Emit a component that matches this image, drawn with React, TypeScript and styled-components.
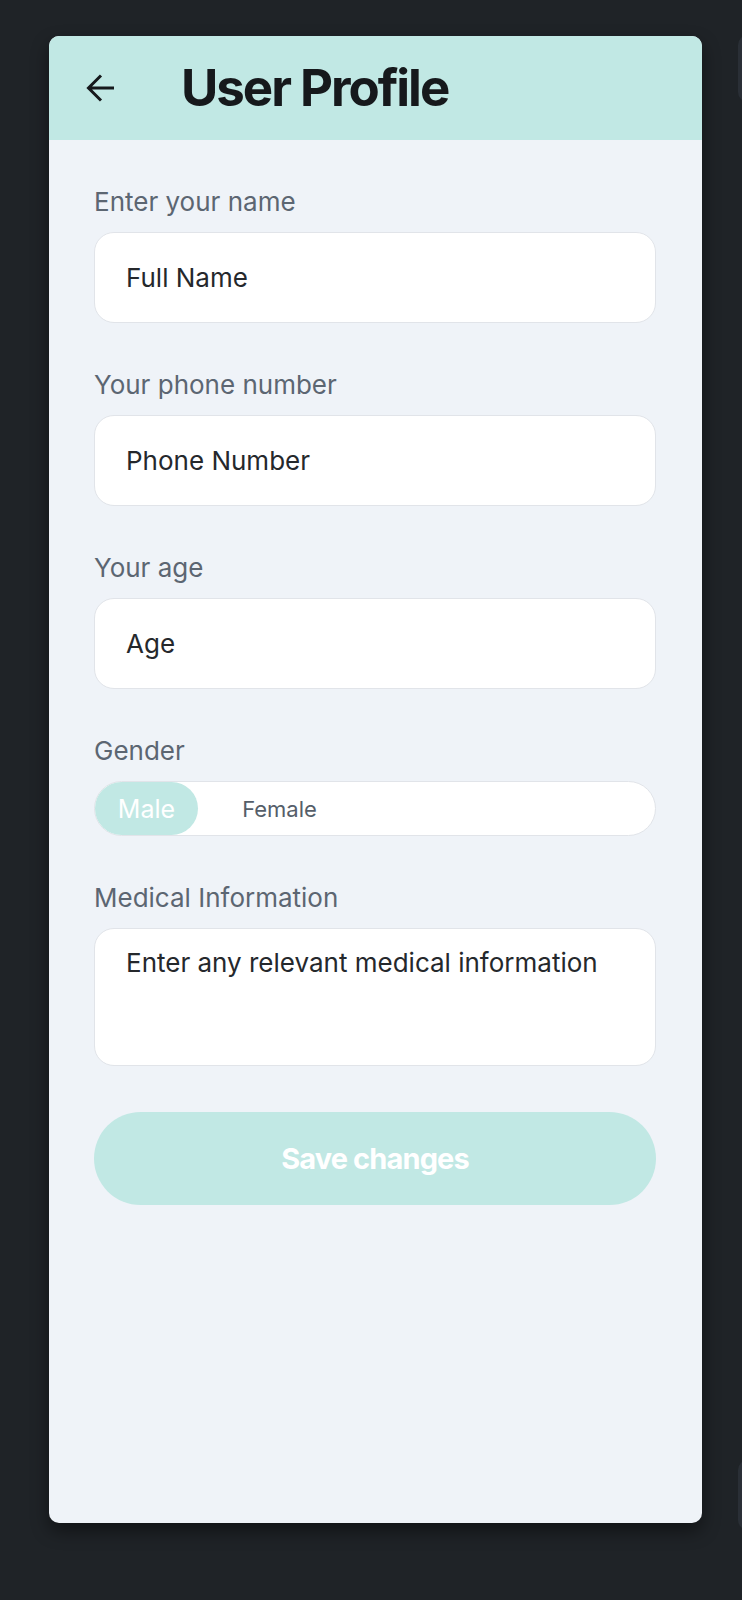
import React, { useState } from "react";
import styled, { createGlobalStyle } from "styled-components";

const GlobalStyle = createGlobalStyle`
  html, body {
    margin: 0;
    padding: 0;
    background: #1f2327;
    overflow: hidden;
    font-family: Inter, "Noto Sans", "Liberation Sans", sans-serif;
  }
  * { box-sizing: border-box; }
`;

const Page = styled.div`
  display: flex;
  align-items: flex-start;
  gap: 36px;
  padding: 36px 0 0 49px;
  width: 742px;
  height: 1600px;
  overflow: hidden;
`;

const Card = styled.div`
  flex: 0 0 653px;
  height: 1487px;
  border-radius: 10px;
  background: #eff3f8;
  box-shadow: 0 8px 18px rgba(0, 0, 0, 0.45);
  overflow: hidden;
  display: flex;
  flex-direction: column;
`;

const Header = styled.header`
  height: 104px;
  background: #c1e8e4;
  display: flex;
  align-items: center;
  padding-left: 37px;
`;

const BackButton = styled.button`
  width: 30px;
  height: 30px;
  padding: 0;
  border: none;
  background: transparent;
  display: flex;
  align-items: center;
  justify-content: center;
  margin-right: 65px;
  cursor: pointer;
`;

const Title = styled.h1`
  margin: 0;
  font-size: 51px;
  line-height: 60px;
  font-weight: 700;
  letter-spacing: -0.04em;
  color: #16191c;
`;

const Form = styled.form`
  display: flex;
  flex-direction: column;
  gap: 46px;
  padding: 46px 46px 0 45px;
`;

const Field = styled.div`
  display: flex;
  flex-direction: column;
  gap: 14px;
`;

const Label = styled.label`
  font-size: 26px;
  line-height: 32px;
  color: #5c6672;
  font-weight: 400;
`;

const TextInput = styled.input`
  height: 91px;
  width: 100%;
  border: 1px solid #e1e4e9;
  border-radius: 20px;
  background: #ffffff;
  padding: 0 31px;
  font-family: inherit;
  font-size: 26px;
  color: #25282c;
  outline: none;
  &::placeholder {
    color: #25282c;
    opacity: 1;
  }
`;

const TextArea = styled.textarea`
  height: 138px;
  width: 100%;
  border: 1px solid #e1e4e9;
  border-radius: 20px;
  background: #ffffff;
  padding: 18px 31px;
  font-family: inherit;
  font-size: 26px;
  line-height: 1.2;
  color: #25282c;
  resize: none;
  outline: none;
  &::placeholder {
    color: #25282c;
    opacity: 1;
  }
`;

const Toggle = styled.div`
  height: 55px;
  border: 1px solid #e1e4e9;
  border-radius: 28px;
  background: #ffffff;
  display: flex;
  align-items: center;
  gap: 30px;
`;

const ToggleOption = styled.button<{ $active: boolean }>`
  width: 103px;
  height: 53px;
  border: none;
  border-radius: 27px;
  padding: 0;
  font-family: inherit;
  background: ${(p) => (p.$active ? "#c1e8e4" : "transparent")};
  color: ${(p) => (p.$active ? "#ffffff" : "#555e69")};
  font-size: ${(p) => (p.$active ? "25px" : "22px")};
  cursor: pointer;
`;

const SaveButton = styled.button`
  height: 93px;
  width: 100%;
  border: none;
  border-radius: 47px;
  background: #c1e8e4;
  color: #ffffff;
  font-family: inherit;
  font-size: 29px;
  font-weight: 700;
  letter-spacing: -0.03em;
  cursor: pointer;
`;

const NextColumn = styled.div`
  flex: 0 0 40px;
  height: 1495px;
  margin-top: -1px;
  display: flex;
  flex-direction: column;
  justify-content: space-between;
`;

const Peek = styled.div<{ $h: number }>`
  height: ${(p) => p.$h}px;
  border-radius: 10px;
  background: #2a2f36;
`;

const ArrowIcon = () => (
  <svg width="30" height="30" viewBox="0 0 30 30" fill="none">
    <path
      d="M28 15H3M15 2.5L2.5 15L15 27.5"
      stroke="#16191c"
      strokeWidth="3"
      strokeLinecap="butt"
      strokeLinejoin="miter"
    />
  </svg>
);

export default function App() {
  const [gender, setGender] = useState<"male" | "female">("male");
  return (
    <>
      <GlobalStyle />
      <Page>
        <Card>
          <Header>
            <BackButton aria-label="Back">
              <ArrowIcon />
            </BackButton>
            <Title>User Profile</Title>
          </Header>
          <Form onSubmit={(e) => e.preventDefault()}>
            <Field>
              <Label>Enter your name</Label>
              <TextInput placeholder="Full Name" />
            </Field>
            <Field>
              <Label>Your phone number</Label>
              <TextInput placeholder="Phone Number" />
            </Field>
            <Field>
              <Label>Your age</Label>
              <TextInput placeholder="Age" />
            </Field>
            <Field>
              <Label>Gender</Label>
              <Toggle>
                <ToggleOption
                  type="button"
                  $active={gender === "male"}
                  onClick={() => setGender("male")}
                >
                  Male
                </ToggleOption>
                <ToggleOption
                  type="button"
                  $active={gender === "female"}
                  onClick={() => setGender("female")}
                >
                  Female
                </ToggleOption>
              </Toggle>
            </Field>
            <Field>
              <Label>Medical Information</Label>
              <TextArea placeholder="Enter any relevant medical information" />
            </Field>
            <SaveButton type="submit">Save changes</SaveButton>
          </Form>
        </Card>
        <NextColumn>
          <Peek $h={67} />
          <Peek $h={70} />
        </NextColumn>
      </Page>
    </>
  );
}
